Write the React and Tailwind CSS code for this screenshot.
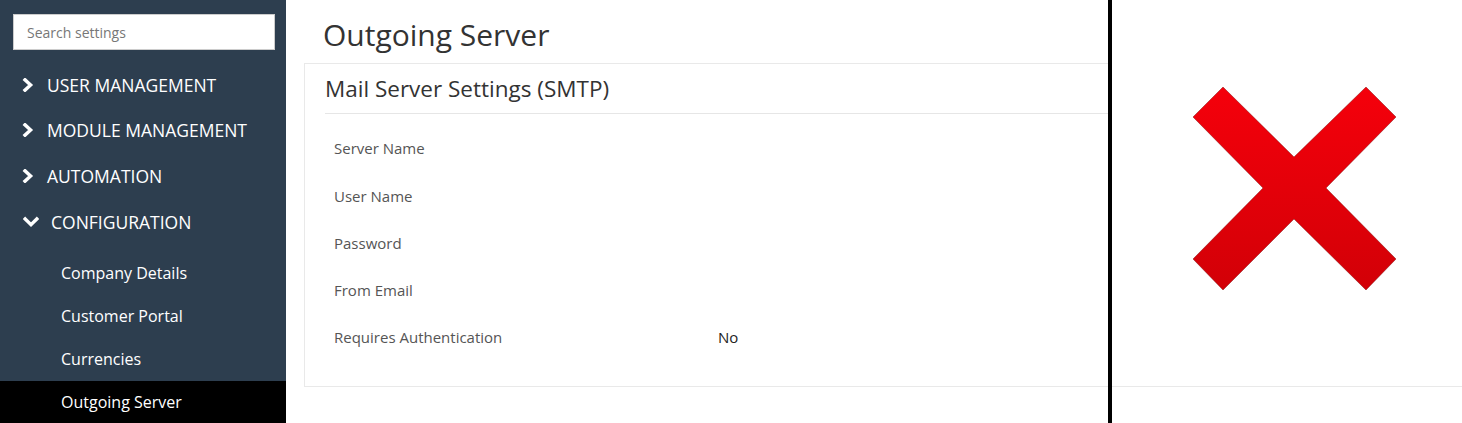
import React from 'react';

const sections = ['USER MANAGEMENT', 'MODULE MANAGEMENT', 'AUTOMATION'];
const subItems = ['Company Details', 'Customer Portal', 'Currencies', 'Outgoing Server'];
const fields = [
  { label: 'Server Name', value: '' },
  { label: 'User Name', value: '' },
  { label: 'Password', value: '' },
  { label: 'From Email', value: '' },
  { label: 'Requires Authentication', value: 'No' },
];

const ChevronRight = () => (
  <svg width="12" height="14" viewBox="0 0 12 14" className="mr-[13px] shrink-0">
    <polyline points="3,1.8 8.6,7 3,12.2" fill="none" stroke="white" strokeWidth="3.4" strokeLinecap="square" strokeLinejoin="miter" />
  </svg>
);

const ChevronDown = () => (
  <svg width="16" height="12" viewBox="0 0 16 12" className="mr-[12px] shrink-0">
    <polyline points="2.2,3 8,8.6 13.8,3" fill="none" stroke="white" strokeWidth="3.4" strokeLinecap="square" strokeLinejoin="miter" />
  </svg>
);

const RedCross = () => (
  <svg width="204" height="204" viewBox="0 0 204 204">
    <defs>
      <linearGradient id="xg" x1="0" y1="0" x2="0" y2="1">
        <stop offset="0" stopColor="#f5000b" />
        <stop offset="1" stopColor="#d20007" />
      </linearGradient>
    </defs>
    <polygon
      points="30,0 101,70 173,0 203,30 133,101 203,172 173,203 101,132 30,203 0,172 70,101 0,30"
      fill="url(#xg)"
      stroke="#7a0a0a"
      strokeOpacity="0.45"
      strokeWidth="1"
    />
  </svg>
);

const Sidebar = () => (
  <aside className="w-[286px] shrink-0 bg-[#2d3e4f] pt-[14px] flex flex-col">
    <div className="pl-[13px]">
      <input
        className="w-[262px] h-[36px] bg-white border border-[#ccc] px-[13px] text-[14px] text-[#333] placeholder:text-[#777] outline-none"
        placeholder="Search settings"
      />
    </div>
    <nav className="mt-[12px]">
      {sections.map((s) => (
        <div key={s} className="h-[45.67px] flex items-center pl-[22px] text-white text-[17.5px]">
          <ChevronRight />
          <span>{s}</span>
        </div>
      ))}
      <div className="h-[45.67px] flex items-center pl-[23px] text-white text-[17.5px]">
        <ChevronDown />
        <span>CONFIGURATION</span>
      </div>
      <ul className="mt-[7px]">
        {subItems.map((item) => (
          <li
            key={item}
            className={`h-[43px] flex items-center pl-[61px] text-[16px] font-medium text-white ${
              item === 'Outgoing Server' ? 'bg-black' : ''
            }`}
          >
            {item}
          </li>
        ))}
      </ul>
    </nav>
  </aside>
);

export default function App() {
  return (
    <div className="relative flex h-[423px] w-[1462px] overflow-hidden bg-white font-['Open_Sans',sans-serif]">
      <Sidebar />
      <main className="flex-1 pl-[18px] pt-[15px] -mr-[20px]">
        <h1 className="pl-[19px] h-[40px] leading-[40px] text-[30px] text-[#333] mb-[8px]">Outgoing Server</h1>
        <section className="border border-[#e9e9e9]">
          <div className="mx-[20px] h-[50px] flex items-center pt-[1px] border-b border-[#e6e6e6] text-[22.5px] text-[#333]">
            Mail Server Settings (SMTP)
          </div>
          <div className="pt-[11px] pb-[25px] pl-[29px]">
            {fields.map((f) => (
              <div key={f.label} className="h-[47.25px] flex items-center text-[15px]">
                <span className="w-[384px] text-[#555]">{f.label}</span>
                <span className="text-[#222]">{f.value}</span>
              </div>
            ))}
          </div>
        </section>
      </main>
      {/* pasted screenshot overlay */}
      <div className="absolute top-0 left-[1108px] w-[4px] h-[423px] bg-black" />
      <div className="absolute top-0 left-[1112px] w-[350px] h-[385px] bg-white">
        <div className="ml-[81px] mt-[87px]">
          <RedCross />
        </div>
      </div>
    </div>
  );
}
